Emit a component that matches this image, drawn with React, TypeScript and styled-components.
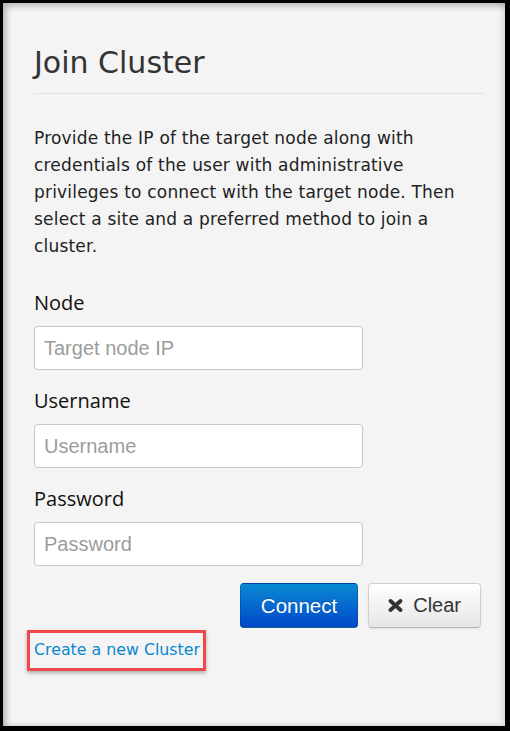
import React from "react";
import styled, { createGlobalStyle } from "styled-components";

const Global = createGlobalStyle`
  html, body { margin: 0; padding: 0; background: #000; }
  * { box-sizing: border-box; }
`;

const Frame = styled.div`
  width: 510px;
  height: 731px;
  border-style: solid;
  border-color: #000;
  border-width: 3px 5px 5px 3px;
  background: #f4f4f4;
  box-shadow: inset 3px 3px 6px rgba(0, 0, 0, 0.28),
    inset -5px -3px 3px rgba(0, 0, 0, 0.05);
  padding: 42px 21px 0 31px;
  display: flex;
  flex-direction: column;
`;

const Title = styled.h1`
  margin: 0;
  font-family: "DejaVu Sans", Verdana, sans-serif;
  font-weight: normal;
  font-size: 30px;
  line-height: 36px;
  color: #333;
  padding-bottom: 12px;
  border-bottom: 1px solid #e2e2e2;
`;

const Intro = styled.p`
  margin: 31px 0 0;
  font-family: "DejaVu Sans", Verdana, sans-serif;
  font-size: 17px;
  letter-spacing: 0.2px;
  line-height: 27px;
  color: #222;
`;

const Form = styled.form`
  margin-top: 29px;
  display: flex;
  flex-direction: column;
`;

const Field = styled.div`
  display: flex;
  flex-direction: column;
  margin-bottom: 17px;
  &:last-of-type {
    margin-bottom: 15px;
  }
`;

const Label = styled.label`
  font-family: "Open Sans", "Noto Sans", sans-serif;
  font-size: 20px;
  line-height: 28px;
  color: #111;
  margin-bottom: 9px;
`;

const Input = styled.input`
  width: 329px;
  height: 44px;
  border: 1px solid #c8c8c8;
  border-radius: 4px;
  background: #fff;
  padding: 0 9px;
  font-family: "Liberation Sans", Arial, sans-serif;
  font-size: 20px;
  color: #333;
  outline: none;
  &::placeholder {
    color: #9c9c9c;
  }
`;

const Actions = styled.div`
  display: flex;
  justify-content: flex-end;
  gap: 10px;
  padding-right: 3px;
`;

const Button = styled.button<{ $primary?: boolean }>`
  height: 45px;
  padding: 0 ${(p) => (p.$primary ? "20px" : "19px")};
  display: inline-flex;
  align-items: center;
  gap: 10px;
  border-radius: 4px;
  font-family: "Liberation Sans", Arial, sans-serif;
  font-size: ${(p) => (p.$primary ? "20.5px" : "20px")};
  cursor: pointer;
  ${(p) =>
    p.$primary
      ? `
    color: #fff;
    background: linear-gradient(to bottom, #0a8ad4, #0048c8);
    border: 1px solid rgba(0,0,0,0.15);
    border-bottom-color: rgba(0,0,0,0.3);
    text-shadow: 0 -1px 0 rgba(0,0,0,0.2);
  `
      : `
    color: #333;
    background: linear-gradient(to bottom, #ffffff, #e6e6e6);
    border: 1px solid #cfcfcf;
    border-bottom-color: #b5b5b5;
    box-shadow: 0 1px 2px rgba(0,0,0,0.08);
  `}
`;

const LinkBox = styled.div`
  align-self: flex-start;
  margin: 2px 0 0 -7px;
  border: 3px solid #f04848;
  padding: 7px 3px 8px 4px;
  box-shadow: 0 2px 4px rgba(0, 0, 0, 0.3);
`;

const Link = styled.a`
  font-family: "DejaVu Sans", Verdana, sans-serif;
  font-size: 15.8px;
  line-height: 20px;
  color: #0a88cc;
  text-decoration: none;
  display: block;
`;

const CloseIcon = () => (
  <svg width="15" height="13" viewBox="0 0 15 13" aria-hidden="true">
    <path
      d="M2.5 2 L12.5 11 M12.5 2 L2.5 11"
      stroke="#333"
      strokeWidth="3.8"
      strokeLinecap="round"
    />
  </svg>
);

export default function App() {
  return (
    <>
      <Global />
      <Frame>
        <Title>Join Cluster</Title>
        <Intro>
          Provide the IP of the target node along with credentials of the user
          with administrative privileges to connect with the target node. Then
          select a site and a preferred method to join a cluster.
        </Intro>
        <Form onSubmit={(e) => e.preventDefault()}>
          <Field>
            <Label htmlFor="node">Node</Label>
            <Input id="node" placeholder="Target node IP" />
          </Field>
          <Field>
            <Label htmlFor="user">Username</Label>
            <Input id="user" placeholder="Username" />
          </Field>
          <Field>
            <Label htmlFor="pass">Password</Label>
            <Input id="pass" type="password" placeholder="Password" />
          </Field>
          <Actions>
            <Button $primary type="submit">
              Connect
            </Button>
            <Button type="button">
              <CloseIcon />
              Clear
            </Button>
          </Actions>
        </Form>
        <LinkBox>
          <Link href="#">Create a new Cluster</Link>
        </LinkBox>
      </Frame>
    </>
  );
}
